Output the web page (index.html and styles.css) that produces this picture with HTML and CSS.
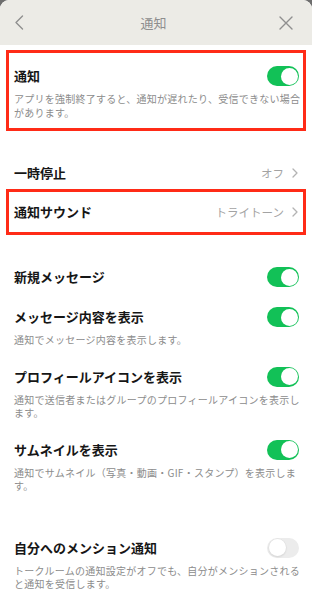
FILE: index.html
```html
<!DOCTYPE html>
<html lang="ja">
<head>
<meta charset="utf-8">
<title>通知</title>
<link rel="stylesheet" href="styles.css">
</head>
<body>
<div class="sheet">
  <header class="nav">
    <span class="nav-btn nav-back">
      <svg width="10" height="15" viewBox="0 0 10 15"><path d="M8.5 1 L2 7.5 L8.5 14" fill="none" stroke="#8f8f8f" stroke-width="1.4" stroke-linecap="round" stroke-linejoin="round"/></svg>
    </span>
    <h1 class="nav-title">通知</h1>
    <span class="nav-btn nav-close">
      <svg width="14" height="14" viewBox="0 0 14 14"><path d="M1 1 L13 13 M13 1 L1 13" fill="none" stroke="#8f8f8f" stroke-width="1.4" stroke-linecap="round"/></svg>
    </span>
  </header>

  <section class="group group-main">
    <div class="row hl hl-main">
      <div class="row-head">
        <span class="title">通知</span>
        <span class="toggle on"><span class="knob"></span></span>
      </div>
      <p class="desc">アプリを強制終了すると、通知が遅れたり、受信できない場合があります。</p>
    </div>
  </section>

  <section class="group group-links">
    <div class="row">
      <div class="row-head">
        <span class="title">一時停止</span>
        <span class="value">オフ<svg class="chev" width="6" height="10" viewBox="0 0 6 10"><path d="M1 1 L5 5 L1 9" fill="none" stroke="#b3b3b3" stroke-width="1.3" stroke-linecap="round" stroke-linejoin="round"/></svg></span>
      </div>
    </div>
    <div class="row hl hl-sound">
      <div class="row-head">
        <span class="title">通知サウンド</span>
        <span class="value">トライトーン<svg class="chev" width="6" height="10" viewBox="0 0 6 10"><path d="M1 1 L5 5 L1 9" fill="none" stroke="#b3b3b3" stroke-width="1.3" stroke-linecap="round" stroke-linejoin="round"/></svg></span>
      </div>
    </div>
  </section>

  <section class="group group-msg">
    <div class="row row-simple">
      <div class="row-head">
        <span class="title">新規メッセージ</span>
        <span class="toggle on"><span class="knob"></span></span>
      </div>
    </div>
    <div class="row">
      <div class="row-head">
        <span class="title">メッセージ内容を表示</span>
        <span class="toggle on"><span class="knob"></span></span>
      </div>
      <p class="desc">通知でメッセージ内容を表示します。</p>
    </div>
    <div class="row">
      <div class="row-head">
        <span class="title">プロフィールアイコンを表示</span>
        <span class="toggle on"><span class="knob"></span></span>
      </div>
      <p class="desc">通知で送信者またはグループのプロフィールアイコンを表示し<br>ます。</p>
    </div>
    <div class="row">
      <div class="row-head">
        <span class="title">サムネイルを表示</span>
        <span class="toggle on"><span class="knob"></span></span>
      </div>
      <p class="desc">通知でサムネイル（写真・動画・GIF・スタンプ）を表示します。</p>
    </div>
  </section>

  <section class="group group-mention">
    <div class="row">
      <div class="row-head">
        <span class="title">自分へのメンション通知</span>
        <span class="toggle off"><span class="knob"></span></span>
      </div>
      <p class="desc">トークルームの通知設定がオフでも、自分がメンションされると通知を受信します。</p>
    </div>
  </section>
</div>
</body>
</html>
```

FILE: styles.css
```css
* { box-sizing: border-box; }

html, body {
  margin: 0;
  padding: 0;
  background: #6e6e6e;
}

body {
  font-family: "Noto Sans CJK JP", "Noto Sans", sans-serif;
  color: #1a1a1a;
}

.sheet {
  background: #ffffff;
  border-radius: 9px 9px 0 0;
  min-height: 600px;
  overflow: hidden;
}

.nav {
  height: 45px;
  background: #ecebe6;
  display: grid;
  grid-template-columns: 1fr auto 1fr;
  align-items: center;
  padding: 0 19px 0 14px;
}

.nav-btn {
  display: flex;
  align-items: center;
}

.nav-back { justify-self: start; }
.nav-close { justify-self: end; }

.nav-title {
  margin: 0;
  font-size: 13px;
  font-weight: 400;
  color: #8e8e8e;
  line-height: 18px;
}

.group-main { margin-top: 12px; }
.group-links { margin-top: 24px; }
.group-msg { margin-top: 26px; }
.group-mention { margin-top: 25px; }

.row {
  padding: 10px 13px 11px 14px;
}

.row-simple {
  padding-bottom: 12px;
}

.row-head {
  height: 18px;
  display: flex;
  align-items: center;
  justify-content: space-between;
}

.title {
  font-size: 13px;
  font-weight: 700;
  line-height: 18px;
  color: #161616;
}

.desc {
  margin: 7px -3px 0 0;
  font-size: 10px;
  line-height: 13.5px;
  letter-spacing: 0.25px;
  color: #8c8c8c;
}

.value {
  display: flex;
  align-items: center;
  gap: 8px;
  font-size: 11.5px;
  color: #a3a3a3;
  padding-right: 1px;
}

.toggle {
  width: 32px;
  height: 20px;
  border-radius: 10px;
  display: flex;
  align-items: center;
  padding: 0 1.5px;
  flex-shrink: 0;
}

.toggle.on {
  background: #12c157;
  justify-content: flex-end;
}

.toggle.off {
  background: #ececec;
  justify-content: flex-start;
}

.knob {
  width: 17px;
  height: 17px;
  border-radius: 50%;
  background: #ffffff;
}

.toggle.off .knob {
  box-shadow: 0 0 0 0.5px #dedede, 0 1px 2px rgba(0, 0, 0, 0.12);
}

.hl { position: relative; }

.hl::after {
  content: "";
  position: absolute;
  left: 6px;
  right: 6px;
  border: 3px solid #ff2b17;
  pointer-events: none;
}

.hl-main::after { top: -7px; bottom: -1px; }
.hl-sound::after { top: -4px; bottom: -3px; }
```
